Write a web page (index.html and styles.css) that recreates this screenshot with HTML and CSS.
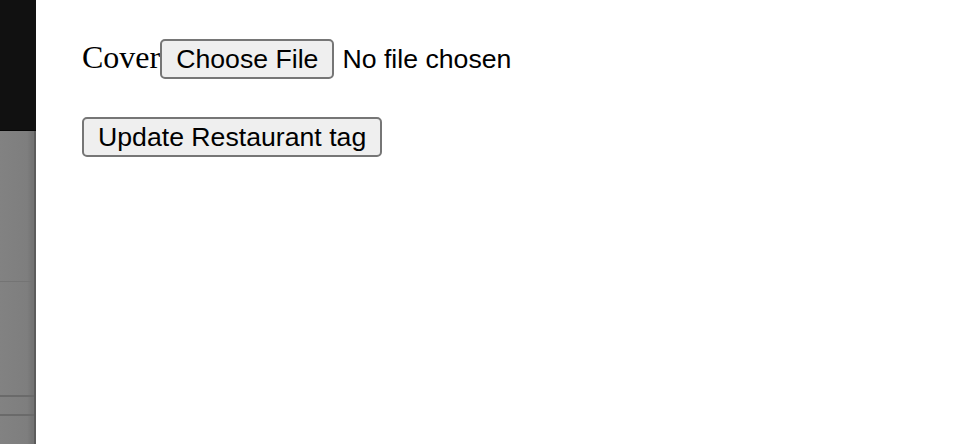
FILE: index.html
```html
<!DOCTYPE html>
<html>
<head>
<meta charset="utf-8">
<link rel="stylesheet" href="styles.css">
</head>
<body>
<div class="page">
  <aside class="sidebar">
    <div class="sb-top"></div>
    <div class="sb-body">
      <div class="sb-seg sb-seg1"></div>
      <div class="sb-seg sb-seg2"></div>
      <div class="sb-seg sb-seg3"></div>
      <div class="sb-seg sb-seg4"></div>
    </div>
  </aside>
  <main class="content">
    <form class="form">
      <div class="field">
        <label class="label">Cover</label><button type="button" class="btn">Choose File</button><span class="file-status">No file chosen</span>
      </div>
      <div class="actions">
        <button type="button" class="btn">Update Restaurant tag</button>
      </div>
    </form>
  </main>
</div>
</body>
</html>
```

FILE: styles.css
```css
html, body {
  margin: 0;
  padding: 0;
  background: #ffffff;
}

.page {
  display: flex;
  height: 444px;
  overflow: hidden;
}

.sidebar {
  width: 36px;
  flex: none;
  display: flex;
  flex-direction: column;
}

.sb-top {
  height: 131px;
  background: #111111;
  border-bottom: 1px solid #060606;
  box-sizing: border-box;
}

.sb-body {
  flex: 1;
  display: flex;
  flex-direction: column;
  background: linear-gradient(to right, #828282 0%, #7e7e7e 80%, #747474 94%);
  border-right: 2px solid #5c5c5c;
}

.sb-seg {
  box-sizing: border-box;
}

.sb-seg1 {
  height: 151px;
  border-bottom: 1px solid #747474;
}

.sb-seg2 {
  height: 115px;
  border-bottom: 2px solid #6a6a6a;
}

.sb-seg3 {
  height: 19px;
  border-bottom: 2px solid #6a6a6a;
}

.sb-seg4 {
  flex: 1;
}

.content {
  flex: 1;
  padding: 39px 0 0 46px;
}

.form {
  display: flex;
  flex-direction: column;
  gap: 38px;
}

.field {
  display: flex;
  align-items: baseline;
}

.label {
  font-family: "Liberation Serif", "Times New Roman", serif;
  font-size: 32px;
  color: #000;
}

.btn {
  font-family: "Liberation Sans", Arial, sans-serif;
  font-size: 26.67px;
  color: #000;
  background: #efefef;
  border: 2px solid #767676;
  border-radius: 5px;
  padding: 2px 14px;
  height: 40px;
  box-sizing: border-box;
  line-height: 32px;
  margin: 0;
}

.file-status {
  font-family: "Liberation Sans", Arial, sans-serif;
  font-size: 26.67px;
  color: #000;
  margin-left: 8px;
}

.actions {
  display: flex;
}
```
